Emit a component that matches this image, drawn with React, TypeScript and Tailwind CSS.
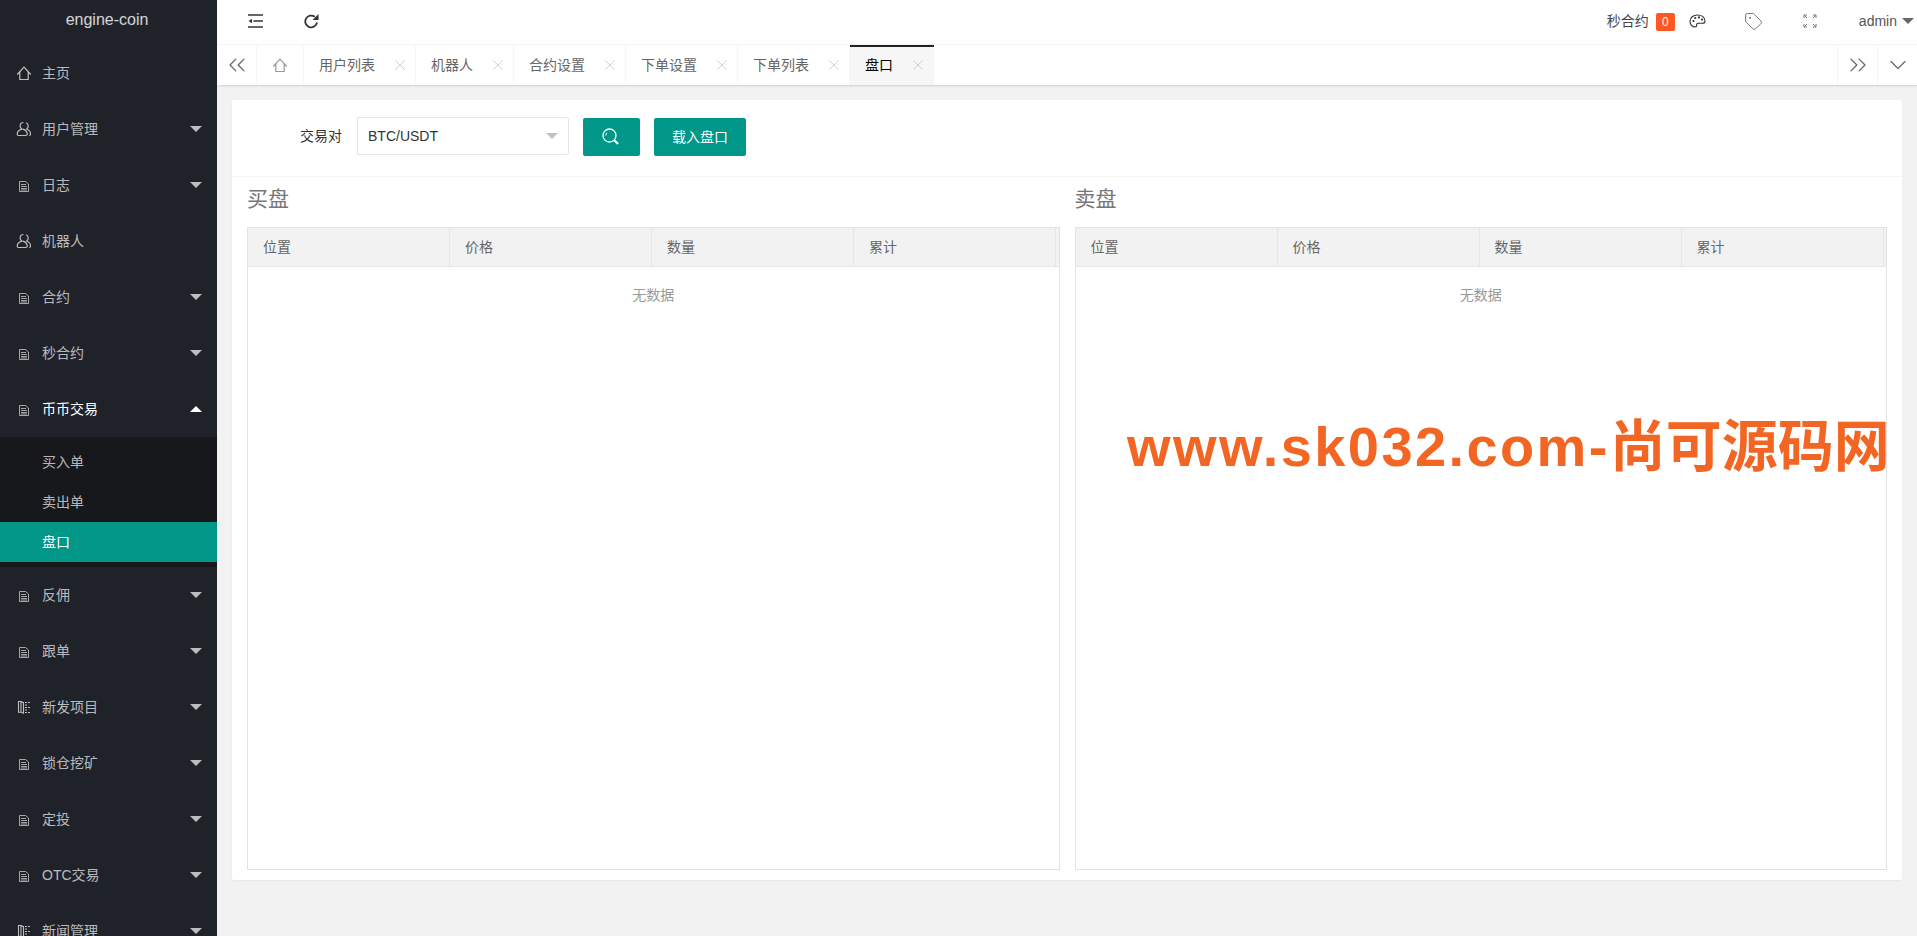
import { ChevronDown, ChevronsLeft, ChevronsRight, Tag, X } from "lucide-react";

const HomeIcon = () => (
  <svg width="16" height="16" viewBox="0 0 16 16" fill="none" stroke="currentColor" strokeWidth="1.200">
    <path d="M1.200 9.500 8 2.200l6.800 7.300M3.800 7v7.500h8.400V7" />
  </svg>
);

const UserIcon = () => (
  <svg width="16" height="16" viewBox="0 0 16 16" fill="none" stroke="currentColor" strokeWidth="1.200">
    <path d="M7.500 1.500c-2 0-3.400 1.500-3.400 3.500 0 1.400.7 2.500 1.700 3.100C3 8.900 1.200 10.800 1.200 13.300c0 .8.500 1.200 1.200 1.200h7.600c.8 0 1.200-.5 1.200-1.200 0-2.500-1.800-4.500-4.300-5.200" />
    <path d="M10 1.700c1.300.5 2.200 1.800 2.200 3.300 0 1.300-.6 2.400-1.500 3 2.200.8 3.800 2.700 3.800 5 0 .9-.4 1.400-1.200 1.500" />
  </svg>
);

const DocIcon = () => (
  <svg width="16" height="16" viewBox="0 0 16 16" fill="none" stroke="currentColor" strokeWidth="1" opacity="0.85">
    <path d="M3.500 4.500h6l3 2.500v7.500h-9zM5 7.500h5M5 9.500h6M5 11.500h6M5 13h6" />
  </svg>
);

const BookIcon = () => (
  <svg width="16" height="16" viewBox="0 0 16 16" fill="none" stroke="currentColor" strokeWidth="1.100">
    <path d="M2.500 2.500h2.500l2.500 1.200v10.500L5 13.300H2.500zM5 2.500v10.800" />
    <path d="M9 3.500h5M9 6h3M9 8.500h5M9 11h3M9 13.500h5" strokeDasharray="2 1" />
  </svg>
);

const ShrinkIcon = () => (
  <svg width="15" height="14" viewBox="0 0 15 14" fill="none" stroke="currentColor" strokeWidth="1.600">
    <path d="M0 1h15M5.500 7H15M0 13h15" />
    <path d="M4 4.700v4.600L0.500 7z" fill="currentColor" stroke="none" />
  </svg>
);

const RefreshIcon = () => (
  <svg width="15" height="16" viewBox="0 0 15 16" fill="none" stroke="currentColor" strokeWidth="1.800">
    <path d="M13 9.500A5.900 5.900 0 1 1 10.800 3.800" />
    <path d="M14.500 1v6h-6z" fill="currentColor" stroke="none" />
  </svg>
);

const PaletteIcon = () => (
  <svg width="17" height="14" viewBox="0 0 17 14" fill="none" stroke="currentColor" strokeWidth="1.100">
    <path d="M8.500 1C4.300 1 1 3.500 1 7.200 1 10.500 3.300 13 6 13c1.400 0 1.700-.9 1.600-1.900-.1-1.200.7-1.800 2-1.800h3.900c1.600 0 2.500-.9 2.500-2.300C16 3.200 12.800 1 8.500 1z" />
    <circle cx="4.500" cy="7" r="1.100" fill="currentColor" stroke="none" />
    <circle cx="6.200" cy="4" r="1.100" fill="currentColor" stroke="none" />
    <circle cx="10" cy="3.400" r="1.100" fill="currentColor" stroke="none" />
    <circle cx="13" cy="5.600" r="1.100" fill="currentColor" stroke="none" />
  </svg>
);

const ExpandIcon = () => (
  <svg width="14" height="14" viewBox="0 0 14 14" fill="none" stroke="currentColor" strokeWidth="1">
    <path d="M1 4V1h3M1 1l3 3M10 1h3v3M13 1l-3 3M1 10v3h3M1 13l3-3M10 13h3v-3M13 13l-3-3" />
  </svg>
);

const SearchIcon = () => (
  <svg width="20" height="20" viewBox="0 0 20 20" fill="none" stroke="currentColor">
    <circle cx="8.500" cy="8.500" r="6.500" strokeWidth="1.300" />
    <path d="M4.800 8.500c0-1.300.5-2.300 1.200-2.800" strokeWidth="1" />
    <path d="M13.500 13.500l3.500 3.500" strokeWidth="2.400" />
  </svg>
);

const Caret = ({ up = false, className = "" }: { up?: boolean; className?: string }) => (
  <span
    className={`block h-0 w-0 border-x-[6px] border-x-transparent ${up ? "border-b-[6px] border-b-white" : "border-t-[6px]"} ${className}`}
  />
);

const menu = [
  { label: "主页", icon: <HomeIcon /> },
  { label: "用户管理", icon: <UserIcon />, arrow: true },
  { label: "日志", icon: <DocIcon />, arrow: true },
  { label: "机器人", icon: <UserIcon /> },
  { label: "合约", icon: <DocIcon />, arrow: true },
  { label: "秒合约", icon: <DocIcon />, arrow: true },
  { label: "币币交易", icon: <DocIcon />, open: true },
  { label: "反佣", icon: <DocIcon />, arrow: true },
  { label: "跟单", icon: <DocIcon />, arrow: true },
  { label: "新发项目", icon: <BookIcon />, arrow: true },
  { label: "锁仓挖矿", icon: <DocIcon />, arrow: true },
  { label: "定投", icon: <DocIcon />, arrow: true },
  { label: "OTC交易", icon: <DocIcon />, arrow: true },
  { label: "新闻管理", icon: <BookIcon />, arrow: true },
];

const tabs = ["用户列表", "机器人", "合约设置", "下单设置", "下单列表"];
const columns = ["位置", "价格", "数量", "累计"];

const Sidebar = () => (
  <aside className="h-full w-[217px] shrink-0 overflow-hidden bg-[#20222a] text-[14px]">
    <div className="flex h-[45px] items-start justify-center pt-[9px] pr-[3px] text-[16px] leading-[22px] text-white/80">engine-coin</div>
    {menu.map((item) => (
      <div key={item.label}>
        <div className={`relative flex h-[56px] items-center pl-[16px] ${item.open ? "text-white" : "text-white/70"}`}>
          <span className={`w-[26px] ${item.open ? "text-white/70" : ""}`}>{item.icon}</span>
          <span>{item.label}</span>
          {item.arrow && <Caret className="absolute top-[25px] right-[15px] border-t-white/70" />}
          {item.open && <Caret up className="absolute top-[25px] right-[15px]" />}
        </div>
        {item.open && (
          <div className="bg-[#17181c] py-[5px]">
            <div className="flex h-[40px] items-center pl-[42px] text-white/70">买入单</div>
            <div className="flex h-[40px] items-center pl-[42px] text-white/70">卖出单</div>
            <div className="flex h-[40px] items-center bg-[#009688] pl-[42px] text-white">盘口</div>
          </div>
        )}
      </div>
    ))}
  </aside>
);

const TopBar = () => (
  <header className="flex h-[45px] items-center border-b border-[#f6f6f6] bg-white pb-[2px] text-[#333]">
    <span className="ml-[31px]"><ShrinkIcon /></span>
    <span className="ml-[41px]"><RefreshIcon /></span>
    <div className="ml-auto flex items-center">
      <span className="text-[14px] text-[#444]">秒合约</span>
      <span className="mt-[1px] ml-[7px] flex h-[18px] w-[19px] items-center justify-center rounded-[2px] bg-[#ff5722] text-[12px] text-white">0</span>
      <span className="ml-[14px]"><PaletteIcon /></span>
      <Tag className="ml-[38px] text-[#555]" size={19} strokeWidth={1} />
      <span className="ml-[40px] text-[#777]"><ExpandIcon /></span>
      <span className="ml-[42px] text-[14px] text-[#555]">admin</span>
      <Caret className="mr-[3px] ml-[5px] border-t-[#666]" />
    </div>
  </header>
);

const TabBar = () => (
  <nav className="relative flex h-[40px] items-stretch bg-white text-[14px] text-[#666] shadow-[0_1px_2px_rgba(0,0,0,0.15)]">
    <div className="flex w-[40px] items-center justify-center border-r border-[#f6f6f6]"><ChevronsLeft size={28} strokeWidth={1.100} /></div>
    <div className="flex w-[47px] items-center justify-center border-r border-[#f6f6f6] text-[#999]"><HomeIcon /></div>
    {tabs.map((tab) => (
      <div key={tab} className="flex items-center border-r border-[#f6f6f6] pl-[15px] pr-[6px]">
        <span>{tab}</span>
        <X className="ml-[16px] text-[#c2c2c2]" size={18} strokeWidth={1} />
      </div>
    ))}
    <div className="flex items-center border-t-2 border-[#20222a] bg-[#f6f6f6] pl-[15px] pr-[7px] pb-[2px] text-black">
      <span>盘口</span>
      <X className="ml-[16px] text-[#c2c2c2]" size={18} strokeWidth={1} />
    </div>
    <div className="ml-auto flex w-[40px] items-center justify-center border-l border-[#f6f6f6]"><ChevronsRight size={28} strokeWidth={1.100} /></div>
    <div className="flex w-[40px] items-center justify-center border-l border-[#f6f6f6]"><ChevronDown size={28} strokeWidth={1} /></div>
  </nav>
);

const BookTable = ({ title }: { title: string }) => (
  <section className="flex min-h-0 flex-col">
    <h2 className="h-[50px] pt-[8px] text-[21px] leading-[28px] text-[#777]">{title}</h2>
    <div className="flex-1 border border-[#e2e2e2]">
      <div className="flex h-[39px] border-b border-[#e6e6e6] bg-[#f2f2f2] text-[14px] text-[#666]">
        {columns.map((column) => (
          <div key={column} className="flex w-[202px] shrink-0 items-center border-r border-[#e6e6e6] pl-[15px]">{column}</div>
        ))}
      </div>
      <p className="pt-[18px] text-center text-[14px] leading-[20px] text-[#999]">无数据</p>
    </div>
  </section>
);

const App = () => {
  return (
    <div className="relative flex h-[936px] w-full overflow-hidden bg-[#f2f2f2] font-['Liberation_Sans','Noto_Sans_CJK_SC',sans-serif]">
      <Sidebar />
      <div className="flex min-w-0 flex-1 flex-col">
        <TopBar />
        <TabBar />
        <main className="flex-1 p-[15px]">
          <div className="flex h-[780px] flex-col rounded-[2px] bg-white shadow-[0_1px_2px_rgba(0,0,0,0.05)]">
            <div className="flex h-[77px] items-start border-b border-[#f6f6f6] pt-[17px] pl-[68px] text-[14px]">
              <label className="w-[42px] pt-[9px] leading-[20px] text-[#333]">交易对</label>
              <div className="ml-[15px] flex h-[38px] w-[212px] items-center justify-between rounded-[2px] border border-[#e6e6e6] pr-[10px] pl-[10px] text-[#333]">
                BTC/USDT
                <Caret className="border-t-[#c2c2c2]" />
              </div>
              <button className="mt-[1px] ml-[14px] flex h-[38px] w-[57px] items-center justify-center rounded-[2px] bg-[#009688] pr-[2px] text-white"><SearchIcon /></button>
              <button className="mt-[1px] ml-[14px] h-[38px] w-[92px] rounded-[2px] bg-[#009688] text-white">载入盘口</button>
            </div>
            <div className="grid flex-1 grid-cols-2 gap-[15px] px-[15px] pb-[10px]">
              <BookTable title="买盘" />
              <BookTable title="卖盘" />
            </div>
          </div>
        </main>
      </div>
      <div className="absolute top-[414px] left-[1127px] flex whitespace-nowrap text-[#f26522] leading-[66px] font-bold">
        <span className="text-[56px] tracking-[2.4px]">www.sk032.com-</span>
        <span className="text-[56px]">尚可源码网</span>
      </div>
    </div>
  );
};

export default App;
